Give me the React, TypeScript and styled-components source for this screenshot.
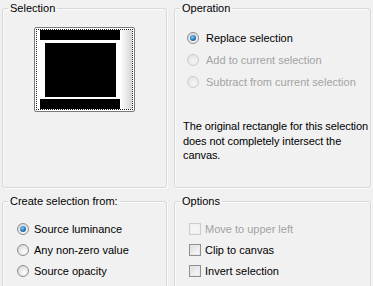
import React from "react";
import styled, { createGlobalStyle } from "styled-components";

const Global = createGlobalStyle`
  html, body { margin: 0; padding: 0; background: #f0f0f0; }
  body {
    font-family: "Liberation Sans", Arial, sans-serif;
    font-size: 11px;
    color: #000;
  }
`;

const Page = styled.div`
  width: 373px;
  height: 286px;
  overflow: hidden;
  box-sizing: border-box;
  padding: 2px 0 0 2px;
  display: grid;
  grid-template-columns: 165px 197px;
  grid-template-rows: 186px 95px;
  column-gap: 7px;
  row-gap: 7px;
`;

const Group = styled.fieldset`
  margin: 0;
  padding: 0;
  min-width: 0;
  border: 1px solid #d6d9db;
  border-radius: 3px;
  box-shadow: inset 1px 1px 0 #fbfbfb, 1px 1px 0 #fbfbfb;
  background: #f1f1f1;
`;

const Legend = styled.legend`
  margin-left: 5px;
  padding: 0 2px;
  line-height: 13px;
  font-size: 11px;
  color: #000;
`;

const Body = styled.div<{ $top: number; $left: number }>`
  padding: ${(p) => p.$top}px 0 0 ${(p) => p.$left}px;
  display: flex;
  flex-direction: column;
`;

const PreviewWrap = styled.div`
  display: flex;
  justify-content: center;
  padding-top: 12px;
`;

const Frame = styled.div`
  width: 101px;
  height: 85px;
  box-sizing: border-box;
  border: 1px solid #7a7a7a;
  border-radius: 2px;
  background: #fff;
  padding: 1px;
`;

const Ants = styled.div`
  height: 100%;
  box-sizing: border-box;
  border: 1px dotted #222;
  display: flex;
`;

const BarsArea = styled.div`
  width: 83px;
  box-sizing: border-box;
  padding-left: 3px;
  display: flex;
  flex-direction: column;
`;

const Bar = styled.div`
  height: 10px;
  background: #000;
`;

const MidRow = styled.div`
  flex: 1;
  padding: 3px 4px 2px 5px;
  display: flex;
`;

const Block = styled.div`
  flex: 1;
  background: #000;
`;

const Strip = styled.div`
  flex: 1;
  margin: 0 0 0 1px;
  background: linear-gradient(to right, #fafafa 0%, #eeeeee 40%, #d3d3d3 100%);
`;

const Row = styled.label<{ $h: number; $gap: number; $disabled?: boolean }>`
  height: ${(p) => p.$h}px;
  display: flex;
  align-items: center;
  gap: ${(p) => p.$gap}px;
  color: ${(p) => (p.$disabled ? "#a3a3a3" : "#000")};
  white-space: nowrap;
`;

const RadioDot = styled.span<{ $checked?: boolean; $disabled?: boolean }>`
  width: 12px;
  height: 12px;
  box-sizing: border-box;
  border-radius: 50%;
  flex: none;
  border: 1px solid ${(p) => (p.$disabled ? "#cdcdcd" : "#8f8f8f")};
  background: ${(p) =>
    p.$disabled
      ? "radial-gradient(circle at 60% 65%, #f6f6f6 0%, #e6e6e6 70%, #dcdcdc 100%)"
      : "radial-gradient(circle at 60% 65%, #ffffff 0%, #e2e2e2 60%, #c8c8c8 100%)"};
  display: flex;
  align-items: center;
  justify-content: center;
  &::after {
    content: "";
    display: ${(p) => (p.$checked ? "block" : "none")};
    width: 6px;
    height: 6px;
    border-radius: 50%;
    background: radial-gradient(circle at 40% 35%, #8ad0f5 0%, #2a7cc0 50%, #0d3f7a 100%);
  }
`;

const CheckBox = styled.span<{ $disabled?: boolean }>`
  width: 12px;
  height: 12px;
  box-sizing: border-box;
  flex: none;
  border: 1px solid ${(p) => (p.$disabled ? "#cdcdcd" : "#8f8f8f")};
  background: ${(p) =>
    p.$disabled
      ? "#f4f4f4"
      : "linear-gradient(135deg, #d8d8d8 0%, #ececec 50%, #fbfbfb 100%)"};
  box-shadow: inset 0 0 0 1px ${(p) => (p.$disabled ? "#f0f0f0" : "#e8e8e8")};
`;

const Note = styled.div`
  margin-top: 26px;
  margin-left: -4px;
  line-height: 14.5px;
  letter-spacing: -0.08px;
  white-space: nowrap;
`;

const Line = styled.span`
  display: block;
`;

type Opt = { label: string; checked?: boolean; disabled?: boolean };

const operation: Opt[] = [
  { label: "Replace selection", checked: true },
  { label: "Add to current selection", disabled: true },
  { label: "Subtract from current selection", disabled: true },
];

const source: Opt[] = [
  { label: "Source luminance", checked: true },
  { label: "Any non-zero value" },
  { label: "Source opacity" },
];

const options: Opt[] = [
  { label: "Move to upper left", disabled: true },
  { label: "Clip to canvas" },
  { label: "Invert selection" },
];

export default function App() {
  return (
    <>
      <Global />
      <Page>
        <Group>
          <Legend>Selection</Legend>
          <PreviewWrap>
            <Frame>
              <Ants>
                <BarsArea>
                  <Bar />
                  <MidRow>
                    <Block />
                  </MidRow>
                  <Bar />
                </BarsArea>
                <Strip />
              </Ants>
            </Frame>
          </PreviewWrap>
        </Group>

        <Group>
          <Legend>Operation</Legend>
          <Body $top={12} $left={12}>
            {operation.map((o) => (
              <Row key={o.label} $h={22} $gap={7} $disabled={o.disabled}>
                <RadioDot $checked={o.checked} $disabled={o.disabled} />
                {o.label}
              </Row>
            ))}
            <Note>
              <Line>The original rectangle for this selection</Line>
              <Line>does not completely intersect the</Line>
              <Line>canvas.</Line>
            </Note>
          </Body>
        </Group>

        <Group>
          <Legend>Create selection from:</Legend>
          <Body $top={10} $left={14}>
            {source.map((o) => (
              <Row key={o.label} $h={21} $gap={5} $disabled={o.disabled}>
                <RadioDot $checked={o.checked} $disabled={o.disabled} />
                {o.label}
              </Row>
            ))}
          </Body>
        </Group>

        <Group>
          <Legend>Options</Legend>
          <Body $top={10} $left={14}>
            {options.map((o) => (
              <Row key={o.label} $h={21} $gap={4} $disabled={o.disabled}>
                <CheckBox $disabled={o.disabled} />
                {o.label}
              </Row>
            ))}
          </Body>
        </Group>
      </Page>
    </>
  );
}
